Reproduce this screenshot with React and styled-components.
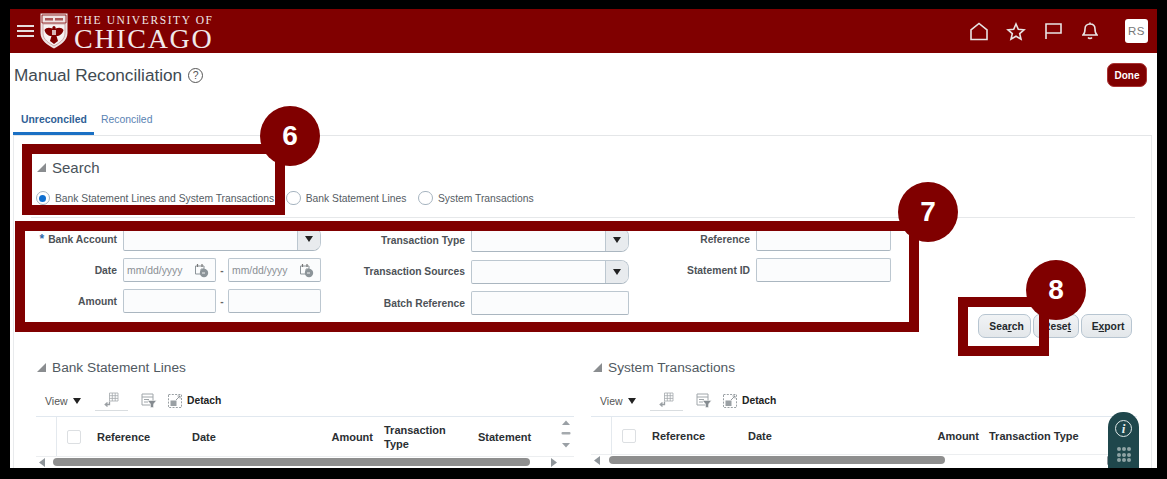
import React from "react";
import styled, { createGlobalStyle } from "styled-components";

const MAROON = "#800000";

const Global = createGlobalStyle`
  html, body { margin: 0; padding: 0; background: #000; }
  body { font-family: "Liberation Sans", Arial, sans-serif; }
  * { box-sizing: border-box; }
`;

const Stage = styled.div`
  position: relative;
  width: 1167px;
  height: 479px;
  padding: 9px 10px 11px;
  background: #000;
  overflow: hidden;
`;
const Page = styled.div`
  width: 1147px;
  height: 459px;
  background: #fff;
  overflow: hidden;
  display: flex;
  flex-direction: column;
`;
const Header = styled.header`
  flex: none;
  height: 44px;
  background: ${MAROON};
  display: flex;
  align-items: center;
  padding: 0 9px 0 7px;
`;
const Burger = styled.div`
  width: 17px;
  display: flex;
  flex-direction: column;
  gap: 3px;
  margin-top: -1px;
  span { display: block; height: 2px; background: #e6dede; }
`;
const Logo = styled.div`
  display: flex;
  align-items: center;
  margin-left: 6px;
  gap: 6px;
  margin-top: -1px;
`;
const Wordmark = styled.div`
  font-family: "Liberation Serif", serif;
  color: #f1e9e9;
  display: flex;
  flex-direction: column;
  margin-top: 4px;
`;
const WordTop = styled.span`
  font-size: 11.5px;
  line-height: 12px;
  letter-spacing: 1.6px;
  margin-left: 1px;
  white-space: nowrap;
`;
const WordBottom = styled.span`
  font-size: 28px;
  line-height: 25px;
  letter-spacing: 1.7px;
  white-space: nowrap;
`;
const HeaderIcons = styled.div`
  margin-left: auto;
  display: flex;
  align-items: center;
`;
const HeaderIcon = styled.span`
  display: flex;
  width: 20px;
  height: 20px;
  margin-right: ${(p) => p.$gap}px;
  align-items: center;
  justify-content: center;
`;
const Avatar = styled.div`
  width: 23px;
  height: 24px;
  border-radius: 3px;
  background: #fff;
  color: #777;
  font-size: 11.5px;
  letter-spacing: 0.4px;
  display: flex;
  align-items: center;
  justify-content: center;
`;
const TitleBar = styled.div`
  flex: none;
  height: 44px;
  display: flex;
  align-items: center;
  padding: 0 10px 0 4px;
`;
const Title = styled.h1`
  margin: 0;
  font-weight: 400;
  font-size: 17.2px;
  color: #404a52;
`;
const Help = styled.span`
  width: 15px;
  height: 15px;
  margin-left: 6px;
  border: 1.3px solid #555;
  border-radius: 50%;
  font-size: 10.5px;
  color: #555;
  display: flex;
  align-items: center;
  justify-content: center;
`;
const DoneButton = styled.button`
  margin-left: auto;
  width: 40px;
  height: 24px;
  border: 1px solid #a33;
  border-radius: 7px;
  background: ${MAROON};
  color: #fff;
  font: 700 10px "Liberation Sans", Arial, sans-serif;
  padding: 0;
`;
const Tabs = styled.nav`
  flex: none;
  height: 39px;
  margin-left: 3px;
  margin-right: 5px;
  display: flex;
  border-bottom: 1px solid #e4e6e8;
`;
const Tab = styled.div`
  height: 38px;
  padding: 17px 8px 0 ${(p) => (p.$active ? 8 : 7)}px;
  font-size: 10.4px;
  font-weight: ${(p) => (p.$active ? 700 : 400)};
  color: ${(p) => (p.$active ? "#2f5f96" : "#5a83b3")};
  border-bottom: ${(p) => (p.$active ? "3px solid #1a70c4" : "3px solid transparent")};
  width: ${(p) => p.$w}px;
  white-space: nowrap;
`;
const Panel = styled.main`
  flex: 1;
  min-height: 0;
  margin: 0 5px 0 3px;
  border-left: 1px solid #e8eaec;
  border-right: 1px solid #e8eaec;
`;
const SearchHead = styled.div`
  display: flex;
  align-items: center;
  gap: 6px;
  height: 20px;
  margin: 21px 0 0 23px;
`;
const Triangle = () => (
  <svg width="9" height="9" viewBox="0 0 9 9"><path d="M9 0V9H0Z" fill="#8a8d90" /></svg>
);
const SearchTitle = styled.h2`
  margin: 0;
  font-size: 15px;
  font-weight: 400;
  color: #49525a;
`;
const RadioRow = styled.div`
  display: flex;
  align-items: center;
  margin: 13px 0 0 21.5px;
  height: 16px;
`;
const RadioItem = styled.label`
  display: flex;
  align-items: center;
  gap: 5px;
  margin-right: 12px;
  font-size: 10.3px;
  color: #555c63;
  white-space: nowrap;
`;
const RadioDot = styled.span`
  width: 14.5px;
  height: 14.5px;
  border-radius: 50%;
  border: 1px solid #a6b4c0;
  background: #fff;
  display: flex;
  align-items: center;
  justify-content: center;
  &::after {
    content: "";
    width: 7px;
    height: 7px;
    border-radius: 50%;
    background: ${(p) => (p.$on ? "#0f6fd0" : "transparent")};
  }
`;
const Divider = styled.hr`
  margin: 11px 16px 0 17px;
  border: 0;
  border-top: 1px solid #e6e8ea;
`;
const FilterRow = styled.div`
  height: 121px;
  padding: 9px 19px 0 0;
  display: flex;
  justify-content: space-between;
`;
const FormColumns = styled.div`
  display: flex;
  align-items: flex-start;
`;
const FormColumn = styled.div`
  display: flex;
  flex-direction: column;
  gap: ${(p) => p.$gap}px;
  margin-top: ${(p) => p.$top || 0}px;
  width: ${(p) => p.$w}px;
`;
const Field = styled.div`
  display: grid;
  grid-template-columns: ${(p) => p.$label}px auto;
  column-gap: 6px;
  align-items: center;
  height: 24px;
`;
const Label = styled.span`
  text-align: right;
  font-size: 10.3px;
  font-weight: 700;
  color: #4d5257;
  white-space: nowrap;
  b { color: #2d68a8; font-size: 12px; margin-right: 4px; }
`;
const Input = styled.div`
  width: ${(p) => p.$w}px;
  height: 24px;
  border: 1px solid #bcc7d0;
  border-bottom-color: #aab6c0;
  border-radius: 2px;
  background: #fbfcfd;
  display: flex;
  align-items: center;
  justify-content: space-between;
  padding: 0 6px 0 3px;
  font-size: 10.4px;
  color: #8a8f94;
`;
const Select = styled(Input)`
  padding: 0;
  border-radius: 2px 8px 8px 2px;
  justify-content: flex-end;
  overflow: hidden;
`;
const SelectArrow = styled.span`
  width: 23px;
  height: 100%;
  background: #e8ebee;
  border-left: 1px solid #bcc7d0;
  display: flex;
  align-items: center;
  justify-content: center;
  &::after {
    content: "";
    border-left: 4px solid transparent;
    border-right: 4px solid transparent;
    border-top: 6px solid #222;
  }
`;
const Range = styled.div`
  display: flex;
  align-items: center;
`;
const Dash = styled.span`
  width: 12px;
  text-align: center;
  font-size: 10px;
  font-weight: 700;
  color: #666;
`;
const Actions = styled.div`
  align-self: flex-end;
  display: flex;
  gap: 2px;
  margin-bottom: 1px;
`;
const Btn = styled.button`
  width: ${(p) => p.$w}px;
  height: 24px;
  padding: 0 0 0 ${(p) => p.$shift}px;
  border: 1px solid #b7c5d1;
  border-radius: 7px;
  background: linear-gradient(#f1f3f5, #e3e7ea);
  color: #23282c;
  font: 700 10.3px "Liberation Sans", Arial, sans-serif;
`;
const Tables = styled.div`
  display: grid;
  grid-template-columns: 538px 546px;
  column-gap: 17px;
  margin: 19px 0 0 22px;
`;
const Section = styled.section`
  min-width: 0;
`;
const SectionHead = styled.div`
  display: flex;
  align-items: center;
  gap: 6px;
  height: 18px;
  margin-left: ${(p) => p.$inset}px;
`;
const SectionTitle = styled.h2`
  margin: 0;
  font-size: 13.7px;
  font-weight: 400;
  color: #515a62;
  white-space: nowrap;
`;
const Toolbar = styled.div`
  height: 41px;
  padding: 17px 0 0 9px;
  display: flex;
  align-items: flex-start;
  border-bottom: 1px solid #e1e8ef;
`;
const ViewMenu = styled.span`
  width: 50px;
  height: 16px;
  display: flex;
  align-items: center;
  gap: 5px;
  font-size: 10.5px;
  color: #555;
  &::after {
    content: "";
    border-left: 4px solid transparent;
    border-right: 4px solid transparent;
    border-top: 6px solid #222;
  }
`;
const ToolButton = styled.span`
  width: ${(p) => p.$w}px;
  height: 21px;
  margin-top: -3px;
  display: flex;
  justify-content: center;
  align-items: center;
  border-bottom: ${(p) => (p.$line ? "1px solid #d9dde0" : "0")};
  margin-right: ${(p) => p.$gap || 0}px;
`;
const DetachText = styled.span`
  margin-left: 5px;
  height: 16px;
  line-height: 16px;
  font-size: 10.3px;
  font-weight: 700;
  color: #222;
`;
const HeadRow = styled.div`
  height: ${(p) => p.$h}px;
  display: grid;
  grid-template-columns: ${(p) => p.$cols};
  align-items: center;
  font-size: 11px;
  font-weight: 700;
  color: #2b2f33;
`;
const GutterCell = styled.div`
  height: 100%;
  border-right: 1px solid #e4e9ee;
`;
const CheckCell = styled.div`
  padding-left: 10px;
  display: flex;
  span {
    width: 14px;
    height: 14px;
    border: 1px solid #dcdfe2;
    border-radius: 2px;
    background: #fff;
  }
`;
const HeadCell = styled.div`
  text-align: ${(p) => (p.$right ? "right" : "left")};
  line-height: 14px;
  white-space: ${(p) => (p.$wrap ? "normal" : "nowrap")};
`;
const SortCell = styled.div`
  justify-self: end;
  width: 14px;
  margin-right: 1px;
`;
const ScrollBar = styled.div`
  height: 11px;
  display: flex;
  align-items: center;
  border-top: 1px solid #eceef0;
`;
const ArrowWrap = styled.span`
  display: flex;
  margin-left: ${(p) => p.$left}px;
`;
const Thumb = styled.span`
  width: ${(p) => p.$w}px;
  height: 8px;
  margin-left: ${(p) => p.$left}px;
  border-radius: 4px;
  background: #8e8e8e;
`;

const CalloutBox = styled.div`
  position: absolute;
  left: ${(p) => p.$x}px;
  top: ${(p) => p.$y}px;
  width: ${(p) => p.$w}px;
  height: ${(p) => p.$h}px;
  border: 10px solid ${MAROON};
`;
const CalloutNum = styled.div`
  position: absolute;
  left: ${(p) => p.$cx - 30}px;
  top: ${(p) => p.$cy - 30}px;
  width: 60px;
  height: 60px;
  border-radius: 50%;
  background: ${MAROON};
  color: #fff;
  font-size: 28px;
  font-weight: 700;
  display: flex;
  align-items: center;
  justify-content: center;
`;
const Widget = styled.div`
  position: absolute;
  left: 1108px;
  top: 412px;
  width: 31px;
  height: 56px;
  border-radius: 15px 15px 0 0;
  background: #1f474c;
  display: flex;
  flex-direction: column;
  align-items: center;
  padding-top: 8px;
`;
const InfoCircle = styled.span`
  width: 17px;
  height: 17px;
  border: 1.3px solid #dfe8e8;
  border-radius: 50%;
  color: #e8efef;
  font: italic 700 13px "Liberation Serif", serif;
  display: flex;
  align-items: center;
  justify-content: center;
`;
const DotGrid = styled.span`
  display: grid;
  grid-template-columns: repeat(3, 4px);
  gap: 1.5px 1px;
  margin-top: 10px;
  i { width: 4px; height: 4px; border-radius: 50%; background: #8fa3a5; }
`;

const Crest = () => (
  <svg width="28" height="36" viewBox="0 0 28 36">
    <path d="M0.5 0.5H27.5V20C27.5 28 20 32 14 35.5C8 32 0.5 28 0.5 20Z" fill="#eee3e3" />
    <path d="M2 2H26V10H2Z" fill="none" stroke="#800000" strokeWidth="0.8" />
    <path d="M5 5H13V7.5H5ZM15 5H23V7.5H15Z" fill="#a55" />
    <path d="M3 11H25V20C25 27 19 30 14 33C9 30 3 27 3 20Z" fill="#f7f2f2" stroke="#a66" strokeWidth="0.5" />
    <path d="M14 13C15 13 16 14 15.5 15.5C19 14 22 14.5 23.5 17C22.5 21 19.5 23 16.5 23L18 28L14 31L10 28L11.5 23C8.5 23 5.5 21 4.5 17C6 14.5 9 14 12.5 15.5C12 14 13 13 14 13Z" fill="#800000" />
    <path d="M12 17H16V22H12Z" fill="#d9b7b7" />
  </svg>
);
const ic = { fill: "none", stroke: "#e8e4e4", strokeWidth: 1.6, strokeLinejoin: "miter" };
const HomeIcon = () => (
  <svg width="20" height="19" viewBox="0 0 20 19"><path d="M2 17.5V8L10 1.5L18 8V17.5Z" {...ic} /></svg>
);
const StarIcon = () => (
  <svg width="20" height="19" viewBox="0 0 20 19"><path d="M10 2L12.3 7.3L18 7.8L13.7 11.6L15 17.2L10 14.2L5 17.2L6.3 11.6L2 7.8L7.7 7.3Z" {...ic} /></svg>
);
const FlagIcon = () => (
  <svg width="18" height="18" viewBox="0 0 18 18"><path d="M2 17V2H17V11H2" {...ic} /></svg>
);
const BellIcon = () => (
  <svg width="16" height="18" viewBox="0 0 16 18"><path d="M1 13C3 11.5 3 10 3 7C3 4 5 2 8 2C11 2 13 4 13 7C13 10 13 11.5 15 13Z M6 15.5C7 16.7 9 16.7 10 15.5 M8 0.5V2" {...ic} /></svg>
);
const CalendarIcon = () => (
  <svg width="15" height="15" viewBox="0 0 15 15">
    <path d="M1.5 3H10V6H7V11H1.5Z" fill="none" stroke="#8c9499" strokeWidth="1" />
    <path d="M3.5 1V4M8 1V4" stroke="#777" strokeWidth="1.2" />
    <circle cx="10" cy="10" r="4.2" fill="#8c9499" />
    <path d="M8 10H11" stroke="#fff" strokeWidth="0.9" />
  </svg>
);
const FreezeIcon = () => (
  <svg width="15" height="17" viewBox="0 0 15 17">
    <path d="M5.5 1H14V9H5.5ZM5.5 3.7H14M5.5 6.4H14M8.3 1V9M11.2 1V9" fill="none" stroke="#a3a8ac" strokeWidth="0.8" />
    <path d="M5.5 9.5V12.5H1.5M3.5 10.5L1.2 12.5L3.5 14.5" fill="none" stroke="#9a9fa3" strokeWidth="1.3" />
  </svg>
);
const FilterIcon = () => (
  <svg width="16" height="15" viewBox="0 0 16 15">
    <path d="M1 1H12V12H1ZM1 4H12M3 6.5H8M3 9H7" fill="none" stroke="#a0a6aa" strokeWidth="1" />
    <path d="M6.5 7.5H15.5L12.5 11V14.5H9.5V11Z" fill="#858b90" stroke="#fff" strokeWidth="0.5" />
  </svg>
);
const DetachIcon = () => (
  <svg width="14" height="14" viewBox="0 0 14 14">
    <rect x="0.5" y="0.5" width="13" height="13" fill="none" stroke="#9aa0a4" strokeWidth="1" strokeDasharray="2 1.3" />
    <rect x="2.5" y="6.5" width="6" height="5.5" fill="#9aa0a4" />
    <path d="M8 6L12 2M9.5 2H12V4.5" fill="none" stroke="#8a9094" strokeWidth="0.9" />
  </svg>
);
const Tri = ({ d, w = 7, h = 9, fill = "#8e9499" }) => (
  <svg width={w} height={h} viewBox={`0 0 ${w} ${h}`}><path d={d} fill={fill} /></svg>
);
const SortButtons = () => (
  <svg width="14" height="32" viewBox="0 0 14 32">
    <path d="M3 5L7 0.5L11 5Z" fill="#9aa0a5" />
    <rect x="2.5" y="12" width="9" height="2.5" rx="1" fill="#a5aaae" />
    <path d="M3 23H11L7 27.5Z" fill="#9aa0a5" />
  </svg>
);

const SelectField = ({ w }) => <Select $w={w}><SelectArrow /></Select>;
const DateInput = () => <Input $w={93}>mm/dd/yyyy<CalendarIcon /></Input>;

const TableTools = () => (
  <Toolbar>
    <ViewMenu>View</ViewMenu>
    <ToolButton $w={33} $line $gap={13}><FreezeIcon /></ToolButton>
    <ToolButton $w={16} $gap={11}><FilterIcon /></ToolButton>
    <ToolButton $w={14}><DetachIcon /></ToolButton>
    <DetachText>Detach</DetachText>
  </Toolbar>
);

export default function App() {
  return (
    <Stage>
      <Global />
      <Page>
        <Header>
          <Burger><span /><span /><span /></Burger>
          <Logo>
            <Crest />
            <Wordmark>
              <WordTop>THE UNIVERSITY OF</WordTop>
              <WordBottom>CHICAGO</WordBottom>
            </Wordmark>
          </Logo>
          <HeaderIcons>
            <HeaderIcon $gap={17}><HomeIcon /></HeaderIcon>
            <HeaderIcon $gap={17}><StarIcon /></HeaderIcon>
            <HeaderIcon $gap={17}><FlagIcon /></HeaderIcon>
            <HeaderIcon $gap={25}><BellIcon /></HeaderIcon>
            <Avatar>RS</Avatar>
          </HeaderIcons>
        </Header>
        <TitleBar>
          <Title>Manual Reconciliation</Title>
          <Help>?</Help>
          <DoneButton>Done</DoneButton>
        </TitleBar>
        <Tabs>
          <Tab $active $w={81}>Unreconciled</Tab>
          <Tab $w={70}>Reconciled</Tab>
        </Tabs>
        <Panel>
          <SearchHead>
            <Triangle />
            <SearchTitle>Search</SearchTitle>
          </SearchHead>
          <RadioRow>
            <RadioItem><RadioDot $on />Bank Statement Lines and System Transactions</RadioItem>
            <RadioItem><RadioDot />Bank Statement Lines</RadioItem>
            <RadioItem><RadioDot />System Transactions</RadioItem>
          </RadioRow>
          <Divider />
          <FilterRow>
            <FormColumns>
              <FormColumn $gap={7} $w={314}>
                <Field $label={103}><Label><b>*</b>Bank Account</Label><SelectField w={198} /></Field>
                <Field $label={103}>
                  <Label>Date</Label>
                  <Range><DateInput /><Dash>-</Dash><DateInput /></Range>
                </Field>
                <Field $label={103}>
                  <Label>Amount</Label>
                  <Range><Input $w={93} /><Dash>-</Dash><Input $w={93} /></Range>
                </Field>
              </FormColumn>
              <FormColumn $gap={7.5} $top={1} $w={301}>
                <Field $label={137}><Label>Transaction Type</Label><SelectField w={158} /></Field>
                <Field $label={137}><Label>Transaction Sources</Label><SelectField w={158} /></Field>
                <Field $label={137}><Label>Batch Reference</Label><Input $w={158} /></Field>
              </FormColumn>
              <FormColumn $gap={7} $w={262}>
                <Field $label={121}><Label>Reference</Label><Input $w={135} /></Field>
                <Field $label={121}><Label>Statement ID</Label><Input $w={135} /></Field>
              </FormColumn>
            </FormColumns>
            <Actions>
              <Btn $w={53} $shift={4}>Sea<u>r</u>ch</Btn>
              <Btn $w={46} $shift={2}>Rese<u>t</u></Btn>
              <Btn $w={51} $shift={3}>E<u>x</u>port</Btn>
            </Actions>
          </FilterRow>
          <Tables>
            <Section>
              <SectionHead $inset={1}><Triangle /><SectionTitle>Bank Statement Lines</SectionTitle></SectionHead>
              <TableTools />
              <HeadRow $h={39} $cols="21px 40px 95px 60px 121px 11px 94px 60px 36px">
                <GutterCell />
                <CheckCell><span /></CheckCell>
                <HeadCell>Reference</HeadCell>
                <HeadCell>Date</HeadCell>
                <HeadCell $right>Amount</HeadCell>
                <span />
                <HeadCell $wrap>Transaction<br />Type</HeadCell>
                <HeadCell>Statement</HeadCell>
                <SortCell><SortButtons /></SortCell>
              </HeadRow>
              <ScrollBar>
                <ArrowWrap $left={3}><Tri d="M6 0V9L0 4.5Z" /></ArrowWrap>
                <Thumb $left={7} $w={477} />
                <ArrowWrap $left={20}><Tri d="M1 0V9L7 4.5Z" /></ArrowWrap>
              </ScrollBar>
            </Section>
            <Section>
              <SectionHead $inset={2}><Triangle /><SectionTitle>System Transactions</SectionTitle></SectionHead>
              <TableTools />
              <HeadRow $h={37} $cols="21px 40px 96px 60px 171px 10px 1fr">
                <GutterCell />
                <CheckCell><span /></CheckCell>
                <HeadCell>Reference</HeadCell>
                <HeadCell>Date</HeadCell>
                <HeadCell $right>Amount</HeadCell>
                <span />
                <HeadCell>Transaction Type</HeadCell>
              </HeadRow>
              <ScrollBar>
                <ArrowWrap $left={3}><Tri d="M6 0V9L0 4.5Z" /></ArrowWrap>
                <Thumb $left={8} $w={336} />
                <ArrowWrap $left={161}><Tri d="M1 0V9L7 4.5Z" /></ArrowWrap>
              </ScrollBar>
            </Section>
          </Tables>
        </Panel>
      </Page>
      <CalloutBox $x={22} $y={144} $w={263} $h={71} />
      <CalloutNum $cx={290} $cy={136}>6</CalloutNum>
      <CalloutBox $x={15} $y={221} $w={904} $h={111} />
      <CalloutNum $cx={928} $cy={212}>7</CalloutNum>
      <CalloutBox $x={958} $y={297} $w={91} $h={59} />
      <CalloutNum $cx={1056} $cy={290}>8</CalloutNum>
      <Widget>
        <InfoCircle>i</InfoCircle>
        <DotGrid>{Array.from({ length: 9 }, (_, k) => <i key={k} />)}</DotGrid>
      </Widget>
    </Stage>
  );
}
